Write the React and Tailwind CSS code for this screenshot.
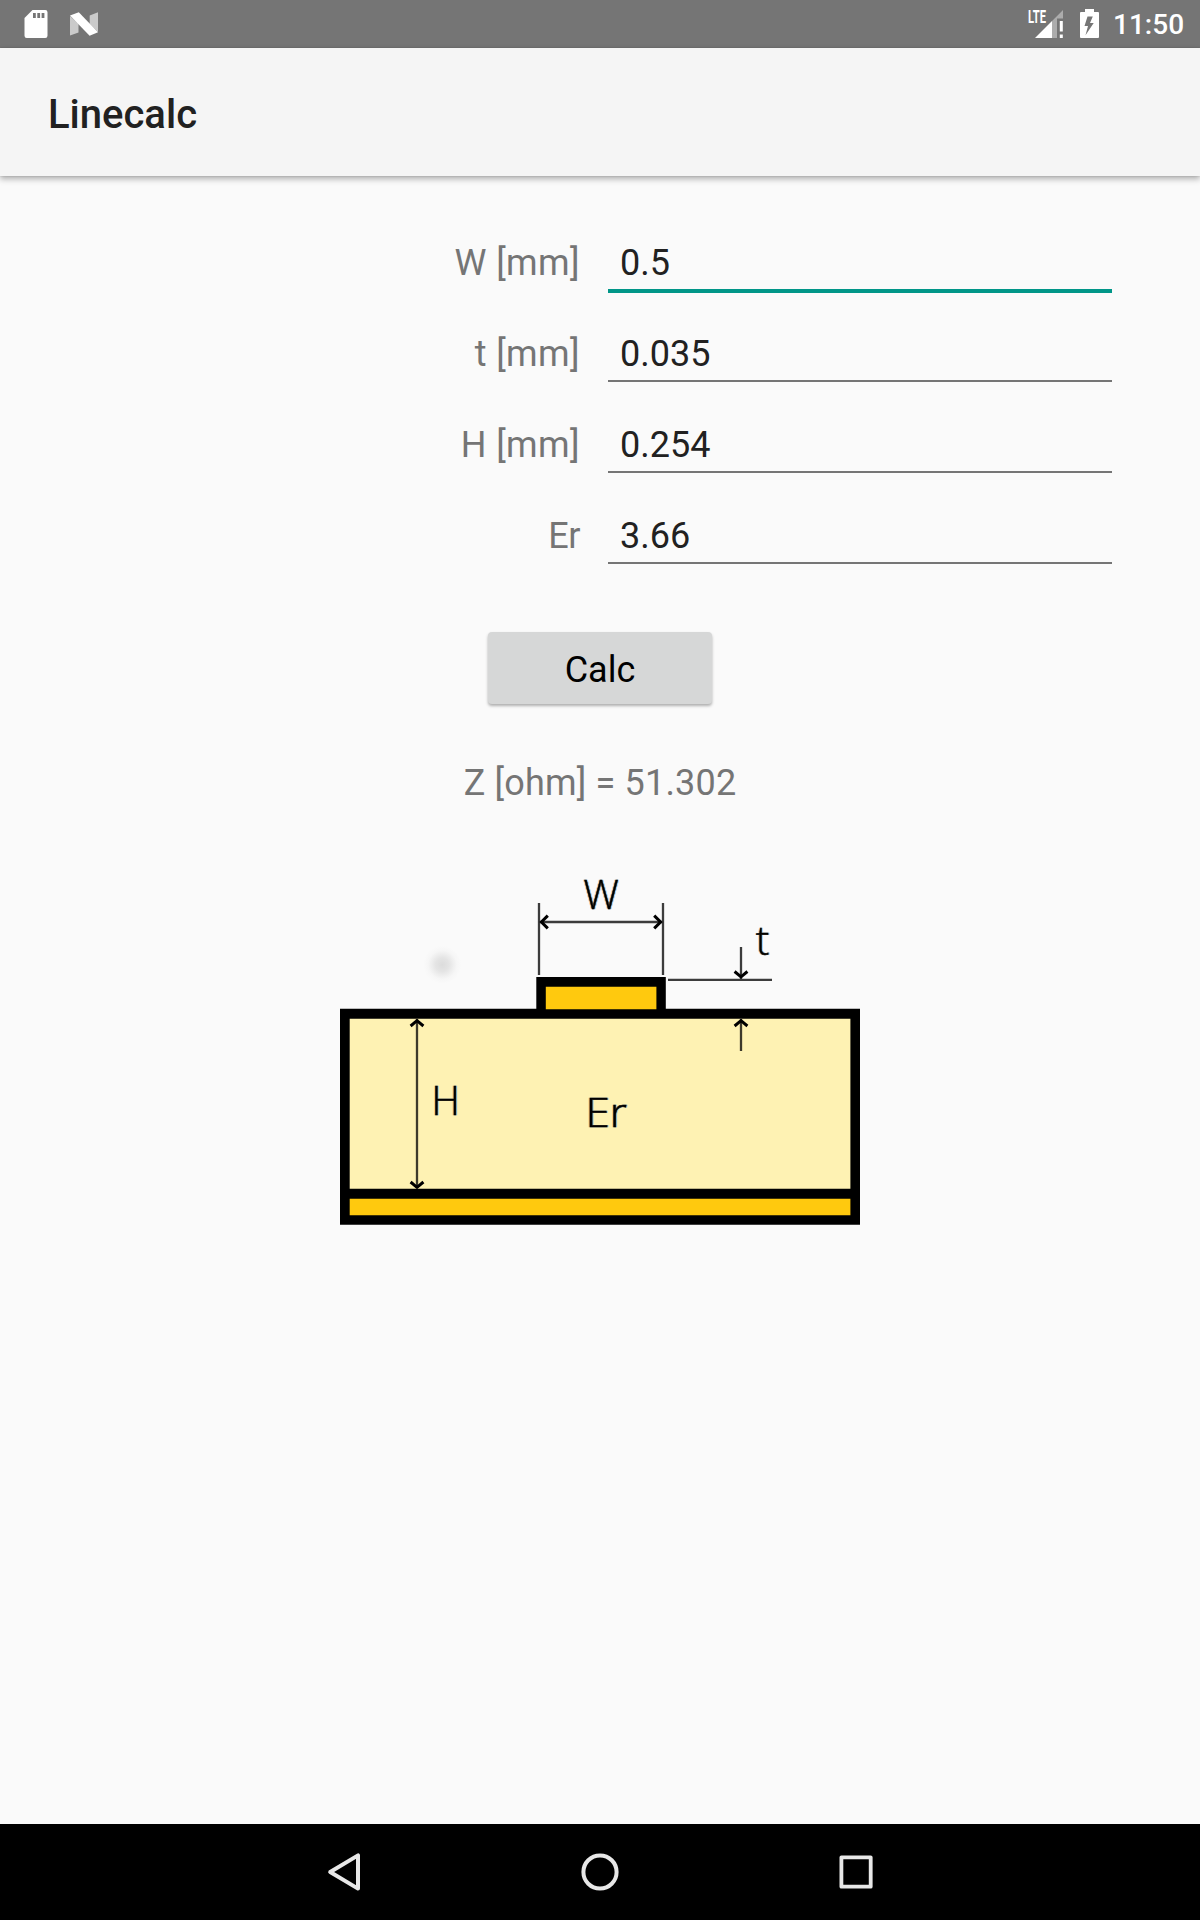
import React from "react";

function StatusBar() {
  return (
    <header className="flex h-12 items-center justify-between bg-[#757575] text-white">
      <div className="flex items-center">
        <svg className="h-12 w-[116px]" viewBox="0 0 116 48" fill="#fff">
          <path
            fillRule="evenodd"
            d="M32.5 10H45.3Q47.5 10 47.5 12.2V35.8Q47.5 38 45.3 38H26.7Q24.5 38 24.5 35.8V18ZM33 13V18H35.8V13ZM37.3 13V18H40.1V13ZM41.6 13V18H44.4V13Z"
          />
          <path d="M70 16L78.5 24V32.5L70 35.5ZM98 12.3V32L89.7 24V15.5Z" opacity=".62" />
          <path d="M70 15.4L78.8 12.2L98 32.2L89.6 35.8Z" />
        </svg>
      </div>
      <div className="flex h-12 items-center">
        <svg className="h-12 w-[93px]" viewBox="1020 0 93 48" fill="#fff">
          <text
            x="1028"
            y="22.8"
            textLength="18"
            lengthAdjust="spacingAndGlyphs"
            className="font-[Roboto,sans-serif] text-[17.5px] font-bold"
          >
            LTE
          </text>
          <path d="M1052 21L1063 10V18.5H1057V38H1052Z" opacity=".4" />
          <path d="M1035 38L1052 21V38Z" />
          <path d="M1059.8 21H1062.8V31.5H1059.8ZM1059.8 34.5H1062.8V38H1059.8Z" />
          <path
            fillRule="evenodd"
            d="M1085 9H1094V12H1098Q1099 12 1099 13V37Q1099 38 1098 38H1081Q1080 38 1080 37V13Q1080 12 1081 12H1085ZM1087.5 16.5L1084.5 26H1088L1085.5 35.3L1093.7 23H1090L1092.8 16.5Z"
          />
        </svg>
        <span className="w-[87px] pt-0.5 text-[28px] font-medium">11:50</span>
      </div>
    </header>
  );
}

const fields = [
  { label: "W [mm]", value: "0.5", active: true },
  { label: "t [mm]", value: "0.035" },
  { label: "H [mm]", value: "0.254" },
  { label: "Er", value: "3.66", tight: true },
];

function Field({ label, value, active, tight }) {
  return (
    <label className="flex h-[91px] items-start">
      <span
        className={
          tight
            ? "w-[580px] text-right text-[36px] leading-[42px] tracking-[-0.4px] text-[#757575]"
            : "w-[580px] text-right text-[36px] leading-[42px] tracking-[0.4px] text-[#757575]"
        }
      >
        {label}
      </span>
      <input
        defaultValue={value}
        className={
          active
            ? "ml-7 h-[51px] w-[504px] border-b-4 border-[#009688] pb-[5px] pl-3 text-[36px] leading-[42px] text-[#212121] outline-none"
            : "ml-7 h-[49px] w-[504px] border-b-2 border-[#757575] pb-[5px] pl-3 text-[36px] leading-[42px] text-[#212121] outline-none"
        }
      />
    </label>
  );
}

function Diagram() {
  const label =
    "font-['Open_Sans','Noto_Sans',sans-serif] text-[39.5px] font-light [filter:drop-shadow(-1px_0_0_#ff9a3099)_drop-shadow(1px_0_0_#3fa8ff99)]";
  return (
    <svg className="h-[380px] w-[520px]" viewBox="340 850 520 380" stroke="none">
      <defs>
        <radialGradient id="spot">
          <stop offset="0" stopColor="#dcdcdc" />
          <stop offset=".35" stopColor="#e4e4e4" />
          <stop offset=".75" stopColor="#f6f6f6" />
          <stop offset="1" stopColor="#fafafa" />
        </radialGradient>
      </defs>
      <circle cx="442.3" cy="964.7" r="19" fill="url(#spot)" />
      <path d="M340 1008.8H860V1224.7H340Z" />
      <path d="M536.3 976.9H665.8V1010H536.3Z" />
      <path d="M349.7 1018.8H850.4V1188.8H349.7Z" fill="#fef2b3" />
      <path d="M349.7 1198.7H850.4V1215.3H349.7ZM545.8 986.7H656.4V1009.2H545.8Z" fill="#ffc90e" />
      <g fill="none" stroke="#000" strokeOpacity=".76" strokeWidth="2.3">
        <path d="M539 903V975M663 903V975M540 922H662M668 979.8H772M741 947V979M741 1019V1051M417 1019V1188" />
      </g>
      <g fill="none" stroke="#000" strokeWidth="3">
        <path d="M547.8 915.6L541.4 922L547.8 928.4M654.2 915.6L660.6 922L654.2 928.4M734.6 971.5L741 976.8L747.4 971.5M734.6 1026L741 1020.7L747.4 1026M410.6 1026L417 1020.7L423.4 1026M410.6 1182L417 1187.3L423.4 1182" />
      </g>
      <g stroke="#000" strokeWidth=".5">
        <text x="583.5" y="909" className={label}>W</text>
        <text x="756" y="955" className={label}>t</text>
        <text x="431.5" y="1115" className={label}>H</text>
        <text x="585.5" y="1127" textLength="41.5" lengthAdjust="spacingAndGlyphs" className={label}>Er</text>
      </g>
    </svg>
  );
}

function NavBar() {
  return (
    <nav className="flex h-24 items-center justify-center gap-[208px] bg-black">
      <svg className="size-12" viewBox="0 0 48 48" fill="none" stroke="#e8e8e8" strokeWidth="4" strokeLinejoin="round">
        <path d="M38 7.4V40.6L10.2 24Z" />
      </svg>
      <svg className="size-12" viewBox="0 0 48 48" fill="none" stroke="#e8e8e8" strokeWidth="4">
        <circle cx="24" cy="24" r="16.6" />
      </svg>
      <svg className="size-12" viewBox="0 0 48 48" fill="none" stroke="#e8e8e8" strokeWidth="3.8" strokeLinejoin="round">
        <path d="M9.4 9.3H38.7V38.7H9.4Z" />
      </svg>
    </nav>
  );
}

export default function App() {
  return (
    <div className="flex h-[1920px] w-[1200px] flex-col overflow-hidden bg-[#fafafa] font-[Roboto,sans-serif]">
      <StatusBar />
      <div className="h-32 bg-[#f5f5f5] pt-[43px] pl-12 shadow-[0_3px_6px_rgba(0,0,0,0.3),0_0_2px_rgba(0,0,0,0.15)]">
        <h1 className="text-[40px] leading-[47px] font-medium text-[#212121]">Linecalc</h1>
      </div>
      <main className="flex flex-1 flex-col items-center pt-[66px]">
        <form className="w-full">
          {fields.map((f) => (
            <Field key={f.label} {...f} />
          ))}
        </form>
        <button className="mt-[26px] h-[72px] w-56 rounded bg-[#d6d7d7] pt-1 text-[36px] leading-[42px] text-black shadow-[0_2px_3px_rgba(0,0,0,0.3)]">
          Calc
        </button>
        <p className="mt-[58px] text-[36px] leading-[42px] tracking-[0.18px] text-[#757575]">Z [ohm] = 51.302</p>
        <div className="mt-[46px]">
          <Diagram />
        </div>
      </main>
      <NavBar />
    </div>
  );
}
